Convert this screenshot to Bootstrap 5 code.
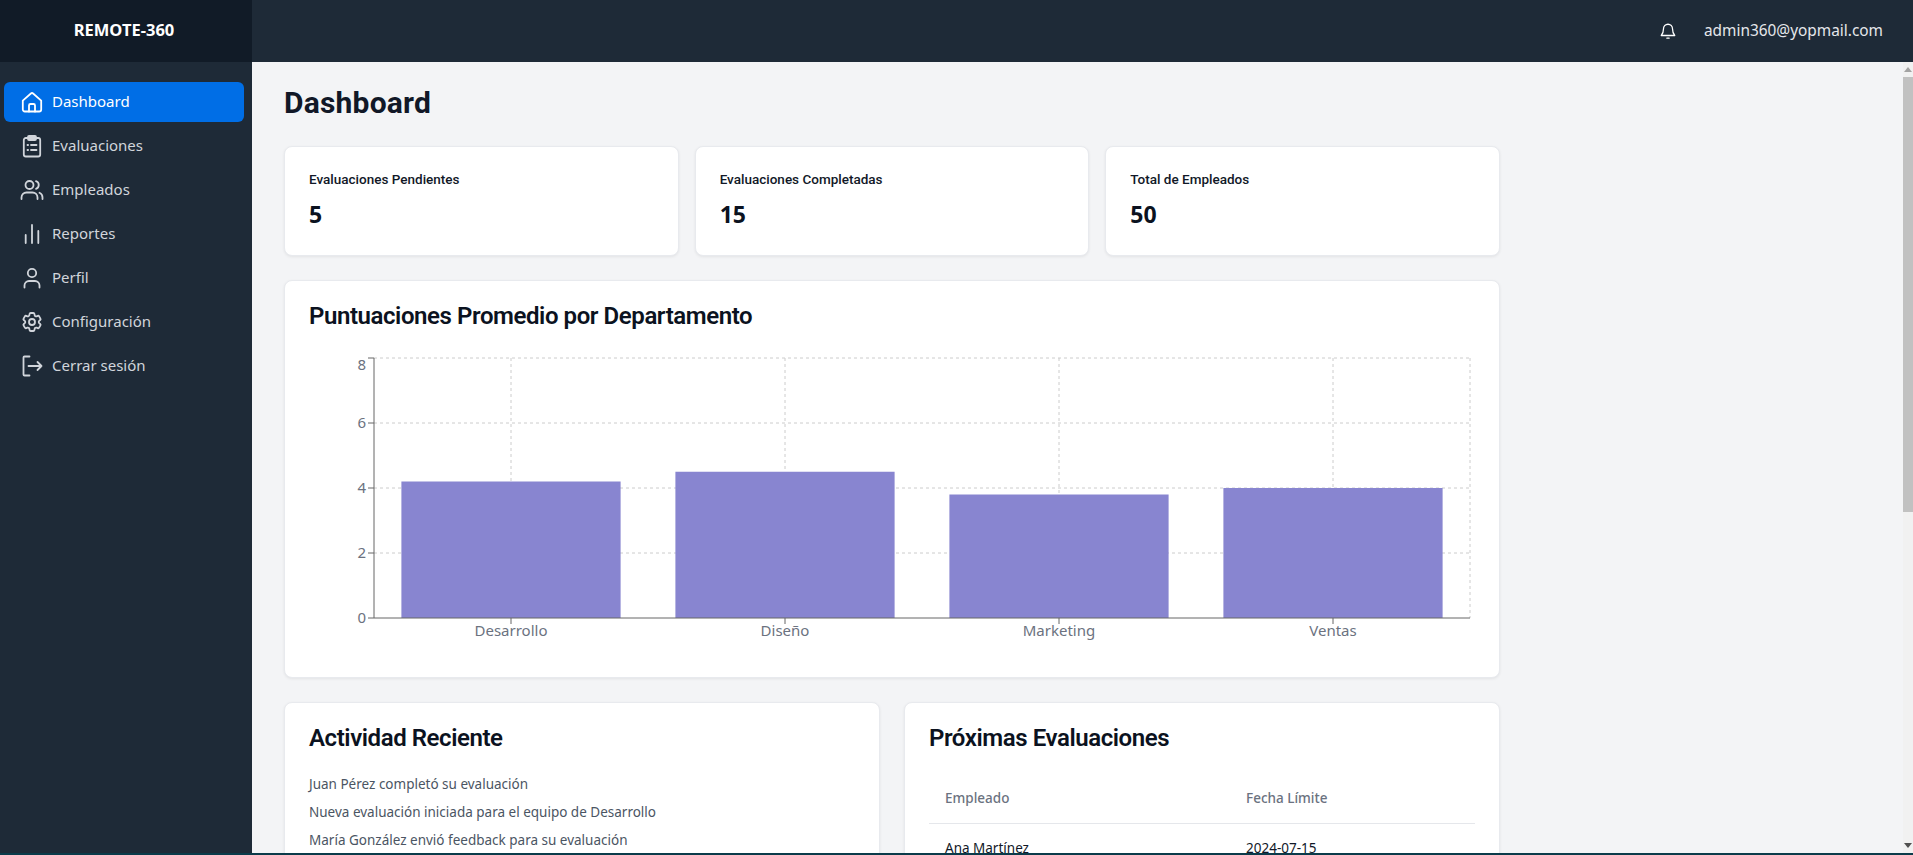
<!DOCTYPE html>
<html lang="es">
<head>
<meta charset="utf-8">
<title>REMOTE-360</title>
<link href="https://cdn.jsdelivr.net/npm/bootstrap@5.3.0/dist/css/bootstrap.min.css" rel="stylesheet">
<style>
html,body{height:100%;overflow:hidden}
body{margin:0;background:#0b3b4a;font-family:"Noto Sans","Liberation Sans",sans-serif;color:#111827}
.shell{height:calc(100vh - 2px)}
.side{width:252px;flex:none;background:#1e2a37}
.brand{height:62px;flex:none;background:#111b27;color:#fff;font-weight:700;font-size:16.5px;padding:0 4px 2px 0}
.side-nav{padding:20px 8px 0 4px}
.side-link{height:40px;padding:0 0 2px 16px;gap:8px;margin-bottom:4px;border-radius:6px;color:#d1d5db;font-size:15px;text-decoration:none}
.side-link.on{background:#006ee6;color:#fff}
.side-link svg{width:24px;height:24px;flex:none;fill:none;stroke:currentColor;stroke-width:1.8;stroke-linecap:round;stroke-linejoin:round;margin-top:2px}
.right-col{min-width:0}
.topbar{height:62px;flex:none;background:#1e2a37;color:#e5e7eb;padding:0 30px 0 0;font-size:15.4px;gap:27px}
.topbar svg{width:18px;height:18px;fill:none;stroke:#fff;stroke-width:1.7;stroke-linecap:round;stroke-linejoin:round}
.work{min-height:0}
.pane{background:#f3f4f6;overflow-y:auto;scrollbar-width:none;min-height:0;min-width:0}
.sbar{width:10px;flex:none;background:#f1f1f1}
.sbar-btn{height:15px;flex:none}
.sbar-thumb{height:435px;flex:none;background:#c1c1c1}
.tri-up{width:0;height:0;border:4px solid transparent;border-top:0;border-bottom:5px solid #a3a3a3}
.tri-down{width:0;height:0;border:4px solid transparent;border-bottom:0;border-top:5px solid #505050}
.inner{width:1280px;padding:22px 32px 48px}
.page-title{font-size:30px;font-weight:700;line-height:38px;margin:0 0 24px;color:#111827;letter-spacing:.2px;font-family:Roboto,"Noto Sans",sans-serif}
.tile{border:1px solid #e8eaee;border-radius:8px;box-shadow:0 1px 3px rgba(0,0,0,.07);background:#fff}
.stat-body{padding:16px 24px 17px;height:108px;box-sizing:border-box}
.stat-label{font-size:13.5px;font-weight:500;line-height:33px;color:#111827;font-family:Roboto,"Noto Sans",sans-serif}
.stat-value{font-size:23px;font-weight:700;line-height:36px;color:#0b1220}
.tile-head{font-size:24px;font-weight:600;line-height:32px;margin:0;color:#0b1220;letter-spacing:-.42px;font-family:Roboto,"Noto Sans",sans-serif}
.chart-body{padding:19px 24px 24px}
.chart-body svg{display:block;width:1166px;height:300px;margin-top:21px}
.chart-body text{font-family:"Noto Sans","Liberation Sans",sans-serif;font-size:15px;fill:#6b7280}
.gridline{stroke:#ccc;stroke-width:1;stroke-dasharray:3 3;fill:none}
.axisline{stroke:#666;stroke-width:1;fill:none}
.feed{font-size:13.5px;color:#4b5563;line-height:28px;margin:16px 0 0;padding:0;list-style:none}
.bottom-body{padding:19px 24px 24px}
.bottom-table{margin:17px 0 0;font-size:13.5px;--bs-table-border-color:#e5e7eb}
.bottom-table th{color:#6b7280;font-weight:500;padding:17px 16px 14px;line-height:21px}
.bottom-table td{padding:14px 16px 13px;color:#111827;line-height:21px}
.bottom-table .c1{width:301px}
</style>
</head>
<body>
<div class="shell d-flex">
  <aside class="side d-flex flex-column">
    <div class="brand d-flex align-items-center justify-content-center">REMOTE-360</div>
    <nav class="side-nav nav flex-column">
      <a class="side-link on d-flex align-items-center" href="#"><svg viewBox="0 0 24 24"><path d="M2.8 10.6 10.9 3.5a1.7 1.7 0 0 1 2.2 0l8.1 7.1V19.5a2 2 0 0 1-2 2H4.8a2 2 0 0 1-2-2z"/><path d="M9 21.5v-6a1.5 1.5 0 0 1 1.5-1.5h3a1.5 1.5 0 0 1 1.5 1.5v6"/></svg>Dashboard</a>
      <a class="side-link d-flex align-items-center" href="#"><svg viewBox="0 0 24 24"><rect x="3.8" y="4" width="16.4" height="18.5" rx="2"/><rect x="8" y="2" width="8" height="4" rx="1"/><path d="M7.5 11h.6M11 11h5.5M7.5 16h.6M11 16h5.5"/></svg>Evaluaciones</a>
      <a class="side-link d-flex align-items-center" href="#"><svg viewBox="0 0 24 24"><circle cx="9.5" cy="7" r="4"/><path d="M1.5 21v-1.5a5 5 0 0 1 5-5h6a5 5 0 0 1 5 5V21"/><path d="M16 3.2a4 4 0 0 1 0 7.6M19.5 14.8a5 5 0 0 1 3 4.7V21"/></svg>Empleados</a>
      <a class="side-link d-flex align-items-center" href="#"><svg viewBox="0 0 24 24"><path d="M5.7 21v-8M12 21V3M18.3 21V9"/></svg>Reportes</a>
      <a class="side-link d-flex align-items-center" href="#"><svg viewBox="0 0 24 24"><circle cx="12" cy="7" r="4.2"/><path d="M4.5 21.5v-2a4.5 4.5 0 0 1 4.5-4.5h6a4.5 4.5 0 0 1 4.5 4.5v2"/></svg>Perfil</a>
      <a class="side-link d-flex align-items-center" href="#"><svg viewBox="0 0 24 24"><path d="M9.594 3.94c.09-.542.56-.94 1.11-.94h2.593c.55 0 1.02.398 1.11.94l.213 1.281c.063.374.313.686.645.87.074.04.147.083.22.127.325.196.72.257 1.075.124l1.217-.456a1.125 1.125 0 0 1 1.37.49l1.296 2.247a1.125 1.125 0 0 1-.26 1.431l-1.003.827c-.293.241-.438.613-.43.992a7.723 7.723 0 0 1 0 .255c-.008.378.137.75.43.991l1.004.827c.424.35.534.955.26 1.43l-1.298 2.247a1.125 1.125 0 0 1-1.369.491l-1.217-.456c-.355-.133-.75-.072-1.076.124a6.47 6.47 0 0 1-.22.128c-.331.183-.581.495-.644.869l-.213 1.281c-.09.543-.56.94-1.11.94h-2.594c-.55 0-1.019-.398-1.11-.94l-.213-1.281c-.062-.374-.312-.686-.644-.87a6.52 6.52 0 0 1-.22-.127c-.325-.196-.72-.257-1.076-.124l-1.217.456a1.125 1.125 0 0 1-1.369-.49l-1.297-2.247a1.125 1.125 0 0 1 .26-1.431l1.004-.827c.292-.24.437-.613.43-.991a6.932 6.932 0 0 1 0-.255c.007-.38-.138-.751-.43-.992l-1.004-.827a1.125 1.125 0 0 1-.26-1.43l1.297-2.247a1.125 1.125 0 0 1 1.37-.491l1.216.456c.356.133.751.072 1.076-.124.072-.044.146-.086.22-.128.332-.183.582-.495.644-.869l.214-1.28Z"/><circle cx="12" cy="12" r="3"/></svg>Configuración</a>
      <a class="side-link d-flex align-items-center" href="#"><svg viewBox="0 0 24 24"><path d="M9.5 2.5H4.5a1 1 0 0 0-1 1v17a1 1 0 0 0 1 1h5"/><path d="M8.5 12h13M17.5 8l4 4-4 4"/></svg>Cerrar sesión</a>
    </nav>
  </aside>
  <div class="right-col d-flex flex-column flex-grow-1">
    <header class="topbar d-flex align-items-center justify-content-end">
      <svg viewBox="0 0 24 24"><path d="M6 9a6 6 0 0 1 12 0c0 5 1.2 7 3 9H3c1.8-2 3-4 3-9z"/><path d="M10.5 21.5h3"/></svg>
      <span>admin360@yopmail.com</span>
    </header>
    <div class="work d-flex flex-grow-1">
    <main class="pane flex-grow-1">
      <div class="inner">
        <h1 class="page-title">Dashboard</h1>
        <div class="row g-3 mb-4">
          <div class="col-4"><div class="card tile"><div class="stat-body"><div class="stat-label">Evaluaciones Pendientes</div><div class="stat-value">5</div></div></div></div>
          <div class="col-4"><div class="card tile"><div class="stat-body"><div class="stat-label">Evaluaciones Completadas</div><div class="stat-value">15</div></div></div></div>
          <div class="col-4"><div class="card tile"><div class="stat-body"><div class="stat-label">Total de Empleados</div><div class="stat-value">50</div></div></div></div>
        </div>
        <div class="card tile mb-4">
          <div class="chart-body">
            <h2 class="tile-head">Puntuaciones Promedio por Departamento</h2>
            <svg viewBox="0 0 1166 300">
              <path class="gridline" d="M65 5H1161M65 70H1161M65 135H1161M65 200H1161M202 5V265M476 5V265M750 5V265M1024 5V265M1161 5V265"/>
              <g fill="#8885d0"><rect x="92.4" y="128.5" width="219.2" height="136.5"/><rect x="366.4" y="118.75" width="219.2" height="146.25"/><rect x="640.4" y="141.5" width="219.2" height="123.5"/><rect x="914.4" y="135" width="219.2" height="130"/></g>
              <path class="axisline" d="M65 5V265M65 265H1161M59 5H65M59 70H65M59 135H65M59 200H65M59 265H65M202 265V271M476 265V271M750 265V271M1024 265V271"/>
              <g text-anchor="end"><text x="57" y="17">8</text><text x="57" y="75">6</text><text x="57" y="140">4</text><text x="57" y="205">2</text><text x="57" y="270">0</text></g>
              <g text-anchor="middle"><text x="202" y="283">Desarrollo</text><text x="476" y="283">Diseño</text><text x="750" y="283">Marketing</text><text x="1024" y="283">Ventas</text></g>
            </svg>
          </div>
        </div>
        <div class="row g-4">
          <div class="col-6"><div class="card tile"><div class="bottom-body">
            <h2 class="tile-head">Actividad Reciente</h2>
            <ul class="feed">
              <li>Juan Pérez completó su evaluación</li>
              <li>Nueva evaluación iniciada para el equipo de Desarrollo</li>
              <li>María González envió feedback para su evaluación</li>
            </ul>
          </div></div></div>
          <div class="col-6"><div class="card tile"><div class="bottom-body">
            <h2 class="tile-head">Próximas Evaluaciones</h2>
            <table class="table bottom-table">
              <thead><tr><th class="c1">Empleado</th><th>Fecha Límite</th></tr></thead>
              <tbody><tr><td>Ana Martínez</td><td>2024-07-15</td></tr></tbody>
            </table>
          </div></div></div>
        </div>
      </div>
    </main>
    <div class="sbar d-flex flex-column align-items-center" aria-hidden="true">
      <div class="sbar-btn d-flex align-items-center justify-content-center"><div class="tri-up"></div></div>
      <div class="sbar-thumb w-100"></div>
      <div class="flex-grow-1"></div>
      <div class="sbar-btn d-flex align-items-center justify-content-center"><div class="tri-down"></div></div>
    </div>
    </div>
  </div>
</div>
<script src="https://cdn.jsdelivr.net/npm/bootstrap@5.3.0/dist/js/bootstrap.bundle.min.js"></script>
</body>
</html>
